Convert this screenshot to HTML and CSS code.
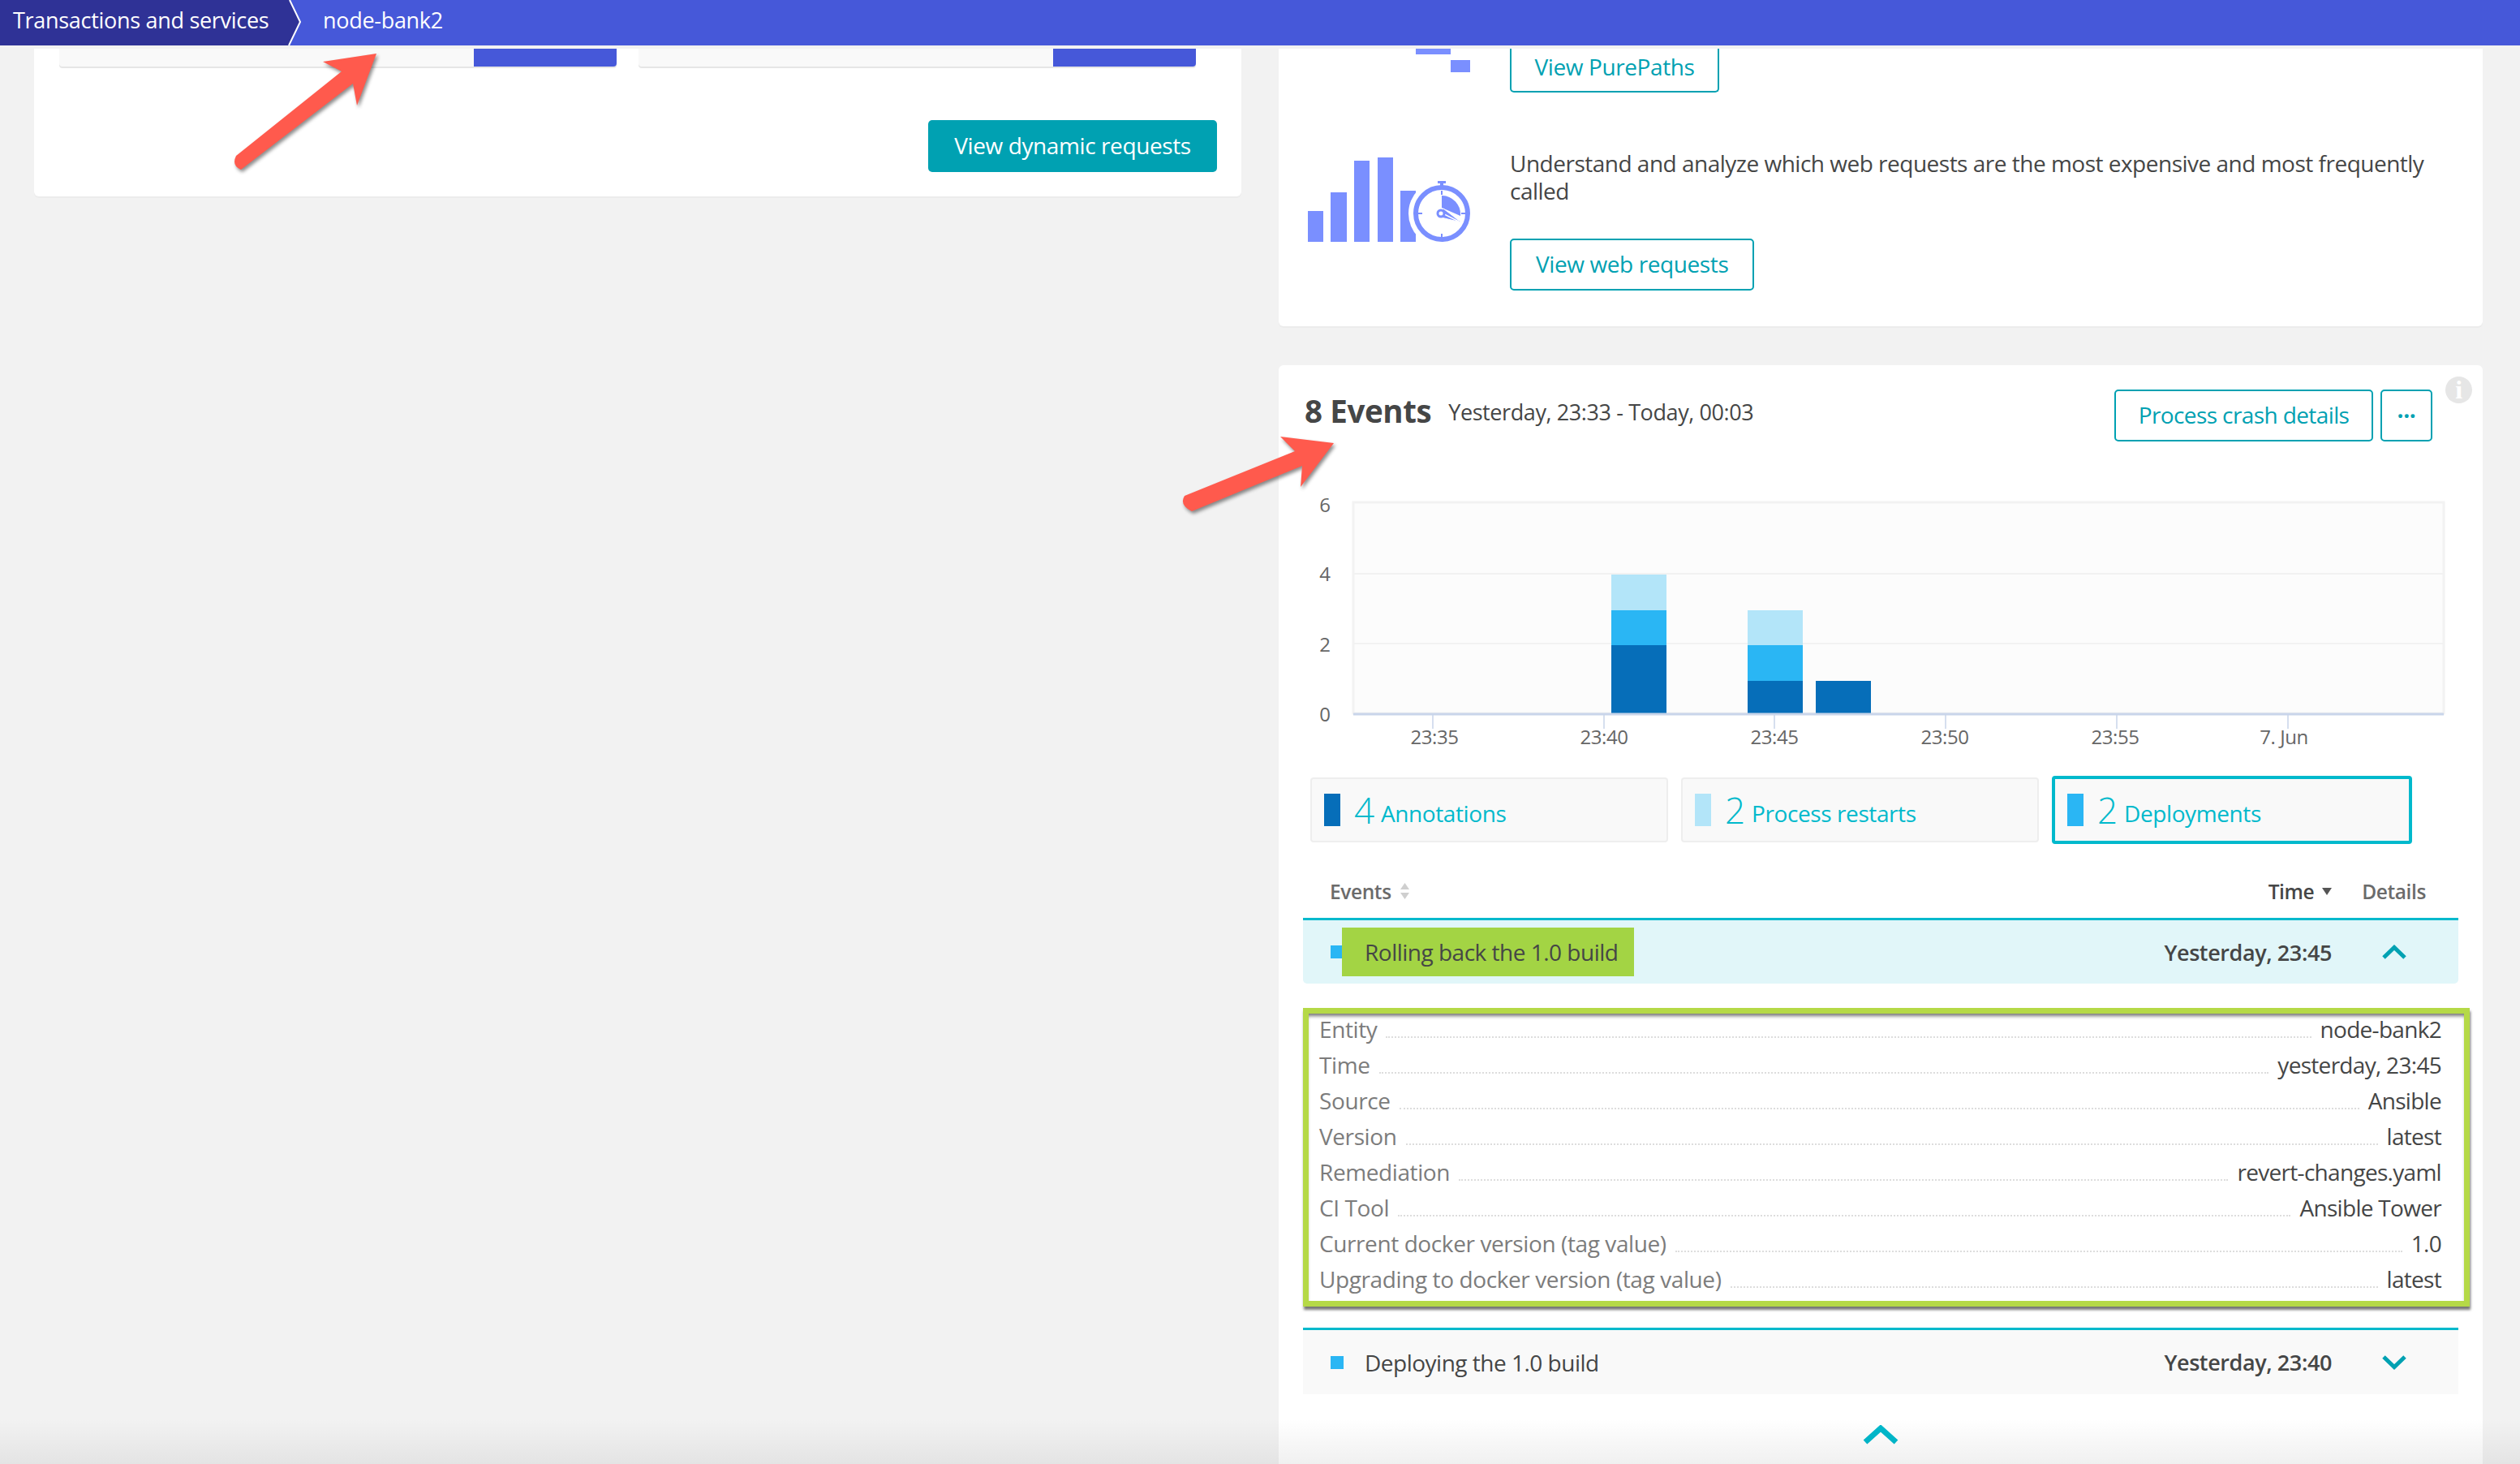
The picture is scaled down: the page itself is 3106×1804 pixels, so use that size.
FILE: index.html
```html
<!DOCTYPE html>
<html lang="en" dir="ltr">
  <head>
    <meta charset="utf-8">
    <title>node-bank2</title>
    <link rel="stylesheet" href="styles.css">
  </head>
  <body>

    <header class="topbar">
      <div class="crumb-first">Transactions and services</div>
      <svg class="crumb-sep" width="18" height="56" viewBox="0 0 18 56">
        <path d="M0 0 L2 0 L15 27 L1 56 L0 56 Z" fill="#2f3296"/>
        <path d="M2 0 L15 27 L1 56" fill="none" stroke="#fff" stroke-width="2"/>
      </svg>
      <div class="crumb-current">node-bank2</div>
    </header>

    <main class="columns">

      <section class="left-col">
        <div class="card dyn-card">
          <div class="dyn-tiles">
            <div class="dyn-tile"><span class="dyn-fill"></span></div>
            <div class="dyn-tile"><span class="dyn-fill"></span></div>
          </div>
          <a class="btn btn-solid">View dynamic requests</a>
        </div>
      </section>

      <section class="right-col">
        <div class="card links-card">
          <div class="link-row">
            <div class="link-icon">
              <svg class="icon-pp" width="200" height="29" viewBox="0 0 200 29">
                <rect x="133" y="0" width="43" height="7" fill="#7a8fff"/>
                <rect x="176" y="14" width="24" height="15" fill="#7a8fff"/>
              </svg>
            </div>
            <div class="link-body">
              <a class="btn btn-line btn-cut">View PurePaths</a>
            </div>
          </div>
          <div class="link-row link-row-two">
            <div class="link-icon">
              <svg class="icon-web" width="200" height="108" viewBox="0 0 200 108">
                <g fill="#7a8fff">
                  <rect x="0" y="66" width="19" height="38"/>
                  <rect x="28" y="43" width="20" height="61"/>
                  <rect x="57" y="4" width="19" height="100"/>
                  <rect x="86" y="0" width="19" height="104"/>
                  <rect x="114" y="41" width="19" height="63"/>
                </g>
                <circle cx="165" cy="69" r="41" fill="#fff"/>
                <g fill="#7a8fff">
                  <rect x="160" y="29" width="10" height="3"/>
                  <rect x="163" y="32" width="4" height="3"/>
                  <rect x="164" y="41" width="2" height="5"/>
                  <rect x="164" y="94" width="2" height="4"/>
                  <rect x="136" y="68" width="5" height="2"/>
                  <rect x="189" y="68" width="5" height="2"/>
                  <path d="M165 47 A23 23 0 0 1 188 72 L172 65 L165 62 Z"/>
                </g>
                <circle cx="165" cy="69" r="32" fill="none" stroke="#7a8fff" stroke-width="6"/>
                <path d="M167 63 L189 80 L160 73 Z" fill="#7a8fff" stroke="#fff" stroke-width="1"/>
                <path d="M166 69 L186 79" stroke="#fff" stroke-width="1.5" fill="none"/>
                <circle cx="164" cy="69" r="4" fill="#fff" stroke="#7a8fff" stroke-width="3"/>
              </svg>
            </div>
            <div class="link-body">
              <p class="link-text">Understand and analyze which web requests are the most expensive and most frequently called</p>
              <a class="btn btn-line">View web requests</a>
            </div>
          </div>
        </div>

        <div class="card events-card">
          <span class="info-dot">i</span>
          <div class="events-head">
            <h2 class="events-title">8 Events</h2>
            <span class="events-range">Yesterday, 23:33 - Today, 00:03</span>
            <a class="btn btn-line btn-crash">Process crash details</a>
            <a class="btn btn-line btn-more">&middot;&middot;&middot;</a>
          </div>

          <svg class="chart" width="1484" height="330" viewBox="1576 600 1484 330">
            <rect x="1668" y="619" width="1344" height="260" fill="#fcfcfc" stroke="#f2f2f2" stroke-width="3"/>
            <line x1="1668" y1="707" x2="3012" y2="707" stroke="#f2f2f2" stroke-width="2"/>
            <line x1="1668" y1="793" x2="3012" y2="793" stroke="#f2f2f2" stroke-width="2"/>

            <rect x="1986" y="708" width="68" height="44" fill="#b3e5f9"/>
            <rect x="1986" y="752" width="68" height="43" fill="#2ab6f4"/>
            <rect x="1986" y="795" width="68" height="84" fill="#066eb9"/>
            <rect x="2154" y="752" width="68" height="43" fill="#b3e5f9"/>
            <rect x="2154" y="795" width="68" height="44" fill="#2ab6f4"/>
            <rect x="2154" y="839" width="68" height="40" fill="#066eb9"/>
            <rect x="2238" y="839" width="68" height="40" fill="#066eb9"/>

            <line x1="1668" y1="880" x2="3012" y2="880" stroke="#c9d5ea" stroke-width="3"/>
            <g stroke="#c9d5ea" stroke-width="1.5">
              <line x1="1766" y1="880" x2="1766" y2="898"/>
              <line x1="1977" y1="880" x2="1977" y2="898"/>
              <line x1="2187" y1="880" x2="2187" y2="898"/>
              <line x1="2398" y1="880" x2="2398" y2="898"/>
              <line x1="2609" y1="880" x2="2609" y2="898"/>
              <line x1="2820" y1="880" x2="2820" y2="898"/>
            </g>

            <g class="axis-y">
              <text x="1633" y="631">6</text>
              <text x="1633" y="716">4</text>
              <text x="1633" y="803">2</text>
              <text x="1633" y="889">0</text>
            </g>
            <g class="axis-x">
              <text x="1768" y="917">23:35</text>
              <text x="1977" y="917">23:40</text>
              <text x="2187" y="917">23:45</text>
              <text x="2397" y="917">23:50</text>
              <text x="2607" y="917">23:55</text>
              <text x="2815" y="917">7. Jun</text>
            </g>
          </svg>

          <div class="legend">
            <div class="tile">
              <i class="swatch swatch-dark"></i><span class="tile-num">4</span><span class="tile-name">Annotations</span>
            </div>
            <div class="tile">
              <i class="swatch swatch-light"></i><span class="tile-num">2</span><span class="tile-name">Process restarts</span>
            </div>
            <div class="tile tile-on">
              <i class="swatch swatch-mid"></i><span class="tile-num">2</span><span class="tile-name">Deployments</span>
            </div>
          </div>

          <div class="ev-table">
            <div class="ev-head">
              <span class="ev-head-name">Events</span>
              <svg class="sort-icon" width="13" height="20" viewBox="0 0 13 20">
                <path d="M6.5 0 L12 8 L1 8 Z M1 12 L12 12 L6.5 20 Z" fill="#cfcfcf"/>
              </svg>
              <span class="ev-head-time">Time</span>
              <svg class="sort-down" width="12" height="9" viewBox="0 0 12 9">
                <path d="M0 0 L12 0 L6 9 Z" fill="#555"/>
              </svg>
              <span class="ev-head-details">Details</span>
            </div>

            <div class="ev-row ev-row-open">
              <i class="ev-square"></i>
              <span class="ev-mark">Rolling back the 1.0 build</span>
              <span class="ev-time">Yesterday, 23:45</span>
              <svg class="chev" width="30" height="18" viewBox="0 0 30 18">
                <path d="M2 16 L15 3.5 L28 16" fill="none" stroke="#00a1b2" stroke-width="5"/>
              </svg>
            </div>

            <div class="details">
              <div class="det-row"><span class="det-key">Entity</span><span class="det-dots"></span><span class="det-val">node-bank2</span></div>
              <div class="det-row"><span class="det-key">Time</span><span class="det-dots"></span><span class="det-val">yesterday, 23:45</span></div>
              <div class="det-row"><span class="det-key">Source</span><span class="det-dots"></span><span class="det-val">Ansible</span></div>
              <div class="det-row"><span class="det-key">Version</span><span class="det-dots"></span><span class="det-val">latest</span></div>
              <div class="det-row"><span class="det-key">Remediation</span><span class="det-dots"></span><span class="det-val">revert-changes.yaml</span></div>
              <div class="det-row"><span class="det-key">CI Tool</span><span class="det-dots"></span><span class="det-val">Ansible Tower</span></div>
              <div class="det-row"><span class="det-key">Current docker version (tag value)</span><span class="det-dots"></span><span class="det-val">1.0</span></div>
              <div class="det-row"><span class="det-key">Upgrading to docker version (tag value)</span><span class="det-dots"></span><span class="det-val">latest</span></div>
            </div>

            <div class="ev-row ev-row-closed">
              <i class="ev-square"></i>
              <span class="ev-name">Deploying the 1.0 build</span>
              <span class="ev-time">Yesterday, 23:40</span>
              <svg class="chev" width="30" height="18" viewBox="0 0 30 18">
                <path d="M2 2 L15 14.5 L28 2" fill="none" stroke="#00a1b2" stroke-width="5"/>
              </svg>
            </div>
          </div>

          <div class="more-up">
            <svg width="44" height="24" viewBox="0 0 44 24">
              <path d="M3 21 L22 4 L41 21" fill="none" stroke="#00b9cc" stroke-width="7"/>
            </svg>
          </div>
        </div>
      </section>
    </main>

    <!-- annotation arrows drawn over the page -->
    <svg class="arrows" width="3106" height="1804" viewBox="0 0 3106 1804">
      <g fill="#ff5a4d" class="arrow-shape">
        <path d="M464 66 L398 76 L421 88 L291 192 Q285 204 297 209 L435 103 L440 130 Z"/>
        <path d="M1644 546 L1578 538 L1596 556 L1460 611 Q1453 622 1469 630 L1605 574 L1603 600 Z"/>
      </g>
    </svg>
    <div class="fade-bottom"></div>

  </body>
</html>
```

FILE: styles.css
```css
html, body {
  margin: 0;
  height: 1804px;
  overflow: hidden;
}

body {
  position: relative;
  background: #f2f2f2;
  font-family: "Open Sans", sans-serif;
  font-size: 28px;
  color: #454646;
  letter-spacing: -0.4px;
}

/* top bar */
.topbar {
  display: flex;
  align-items: center;
  height: 56px;
  background: #4658d9;
  color: #fff;
  font-size: 27px;
  letter-spacing: -0.3px;
}

.crumb-first {
  width: 339px;
  height: 56px;
  line-height: 50px;
  padding-left: 16px;
  background: #2f3296;
  white-space: nowrap;
}

.crumb-sep {
  display: block;
}

.crumb-current {
  margin-left: 25px;
  line-height: 50px;
  height: 56px;
}

/* columns */
.columns {
  display: grid;
  grid-template-columns: 1488px 1484px;
  column-gap: 46px;
  align-items: start;
  margin-top: 4px;
  padding-left: 42px;
}

.card {
  background: #fff;
  border-radius: 0 0 6px 6px;
  box-shadow: 0 2px 0 #ececec;
}

/* buttons */
.btn {
  display: inline-flex;
  align-items: center;
  justify-content: center;
  box-sizing: border-box;
  height: 64px;
  padding: 0 30px 2px;
  border-radius: 5px;
  white-space: nowrap;
}

.btn-solid {
  width: 356px;
  padding: 0 0 2px;
  background: #00a1b2;
  color: #fff;
}

.btn-line {
  border: 2px solid #00a1b2;
  background: #fff;
  color: #00a1b2;
}

.btn-cut {
  height: 54px;
  width: 258px;
  padding: 0 0 8px;
  border-top: 0;
  border-radius: 0 0 5px 5px;
}

/* left card */
.dyn-card {
  display: flex;
  flex-direction: column;
  align-items: flex-end;
  padding: 0 30px 30px 31px;
}

.dyn-tiles {
  display: flex;
  gap: 27px;
  align-self: flex-start;
  margin-bottom: 66px;
}

.dyn-tile {
  display: flex;
  justify-content: flex-end;
  width: 687px;
  height: 22px;
  background: #f9f9f9;
  border-radius: 0 0 4px 4px;
  box-shadow: 0 2px 0 #e6e6e6;
}

.dyn-fill {
  width: 176px;
  background: #4658d9;
  border-radius: 0 0 4px 0;
}

/* right card */
.links-card {
  padding: 0 0 44px 36px;
  margin-bottom: 48px;
}

.link-row {
  display: flex;
}

.link-row-two {
  margin-top: 72px;
}

.link-icon {
  width: 249px;
  flex: none;
}

.link-icon svg {
  display: block;
}

.link-row-two .link-icon {
  padding-top: 8px;
}

.link-text {
  margin: -2px 0 42px;
  line-height: 34px;
  width: 1160px;
  letter-spacing: -0.5px;
}

/* events card */
.events-card {
  position: relative;
  border-radius: 6px 6px 0 0;
  height: 1360px;
}

.info-dot {
  position: absolute;
  top: 14px;
  left: 1438px;
  width: 33px;
  height: 33px;
  border-radius: 50%;
  background: #e6e6e6;
  color: #fff;
  font-family: "Liberation Serif", serif;
  font-size: 32px;
  font-weight: bold;
  line-height: 33px;
  text-align: center;
}

.events-head {
  display: flex;
  align-items: center;
  height: 64px;
  padding: 30px 62px 0 32px;
}

.events-title {
  margin: 0 21px 12px 0;
  font-size: 38.5px;
  font-weight: 700;
}

.events-range {
  margin-bottom: 10px;
  font-size: 27px;
}

.btn-crash {
  width: 319px;
  padding: 0 0 2px;
  margin-left: auto;
  margin-right: 9px;
  letter-spacing: -0.6px;
}

.btn-more {
  width: 64px;
  padding: 0;
  font-weight: bold;
}

.chart {
  display: block;
  margin-top: 56px;
}

.chart text {
  font-family: "Open Sans", sans-serif;
  font-size: 24px;
  fill: #666;
}

.axis-y text, .axis-x text {
  text-anchor: middle;
}

/* legend */
.legend {
  display: flex;
  align-items: center;
  gap: 16px;
  height: 84px;
  margin: 26px 0 0 39px;
}

.tile {
  display: flex;
  align-items: center;
  box-sizing: border-box;
  width: 441px;
  height: 80px;
  padding-left: 15px;
  background: #f9f9f9;
  border: 2px solid #eee;
  border-radius: 4px;
  color: #00b9cc;
}

.tile-on {
  width: 444px;
  height: 84px;
  padding-left: 15px;
  border: 4px solid #00b9cc;
}

.swatch {
  width: 20px;
  height: 40px;
  margin-right: 17px;
}

.swatch-dark { background: #066eb9; }
.swatch-light { background: #b3e5f9; }
.swatch-mid { background: #2ab6f4; }

.tile-num {
  width: 33px;
  font-size: 44px;
  font-weight: 300;
  line-height: 44px;
}

.tile-name {
  padding-top: 8px;
}

/* table */
.ev-table {
  margin: 0 30px;
}

.ev-head {
  display: flex;
  align-items: center;
  box-sizing: border-box;
  height: 91px;
  padding: 25px 40px 0 33px;
  font-size: 24.5px;
  font-weight: 600;
  color: #6b6b6b;
}

.sort-icon {
  margin-left: 10px;
}

.ev-head-time {
  margin-left: auto;
  color: #454646;
}

.sort-down {
  margin-left: 10px;
}

.ev-head-details {
  margin-left: 37px;
}

.ev-row {
  display: flex;
  align-items: center;
  box-sizing: border-box;
  padding: 0 64px 0 34px;
}

.ev-row-open {
  height: 81px;
  background: #e1f6f9;
  border-top: 3px solid #00b9cc;
  border-radius: 0 0 5px 5px;
}

.ev-row-closed {
  height: 82px;
  margin-top: 26px;
  background: #f9f9f9;
  border-top: 3px solid #00b9cc;
}

.ev-square {
  width: 16px;
  height: 16px;
  background: #2ab6f4;
  flex: none;
}

.ev-mark {
  display: flex;
  align-items: center;
  height: 60px;
  width: 332px;
  margin-left: -2px;
  padding-left: 28px;
  background: #a3d444;
  white-space: nowrap;
  letter-spacing: -0.5px;
}

.ev-name {
  margin-left: 26px;
  letter-spacing: -0.5px;
}

.ev-time {
  margin-left: auto;
  font-size: 27px;
  font-weight: 600;
}

.chev {
  margin-left: 62px;
  flex: none;
}

/* highlighted details */
.details {
  box-sizing: border-box;
  height: 368px;
  margin: 30px -14px 0 0;
  padding: 0 28px 0 13px;
  border: 7px solid #b5d947;
  box-shadow: 1px 4px 3px #777, inset 0 5px 4px -2px #777;
}

.det-row {
  display: flex;
  align-items: baseline;
  height: 44px;
  line-height: 44px;
  position: relative;
  top: -3px;
}

.det-key {
  color: #7c7c7c;
}

.det-val {
  letter-spacing: -0.7px;
}

.det-dots {
  flex: 1;
  margin: 0 11px;
  border-bottom: 2px dotted #ddd;
}

/* up chevron at the end of the card */
.more-up {
  display: flex;
  justify-content: center;
  margin-top: 38px;
}

/* overlays */
.arrows {
  position: absolute;
  left: 0;
  top: 0;
  pointer-events: none;
}

.arrow-shape {
  filter: drop-shadow(2px 3px 2px rgba(0, 0, 0, 0.45));
}

.fade-bottom {
  position: absolute;
  left: 0;
  right: 0;
  bottom: 0;
  height: 56px;
  background: linear-gradient(to bottom, rgba(0, 0, 0, 0), rgba(0, 0, 0, 0.06));
}
```
